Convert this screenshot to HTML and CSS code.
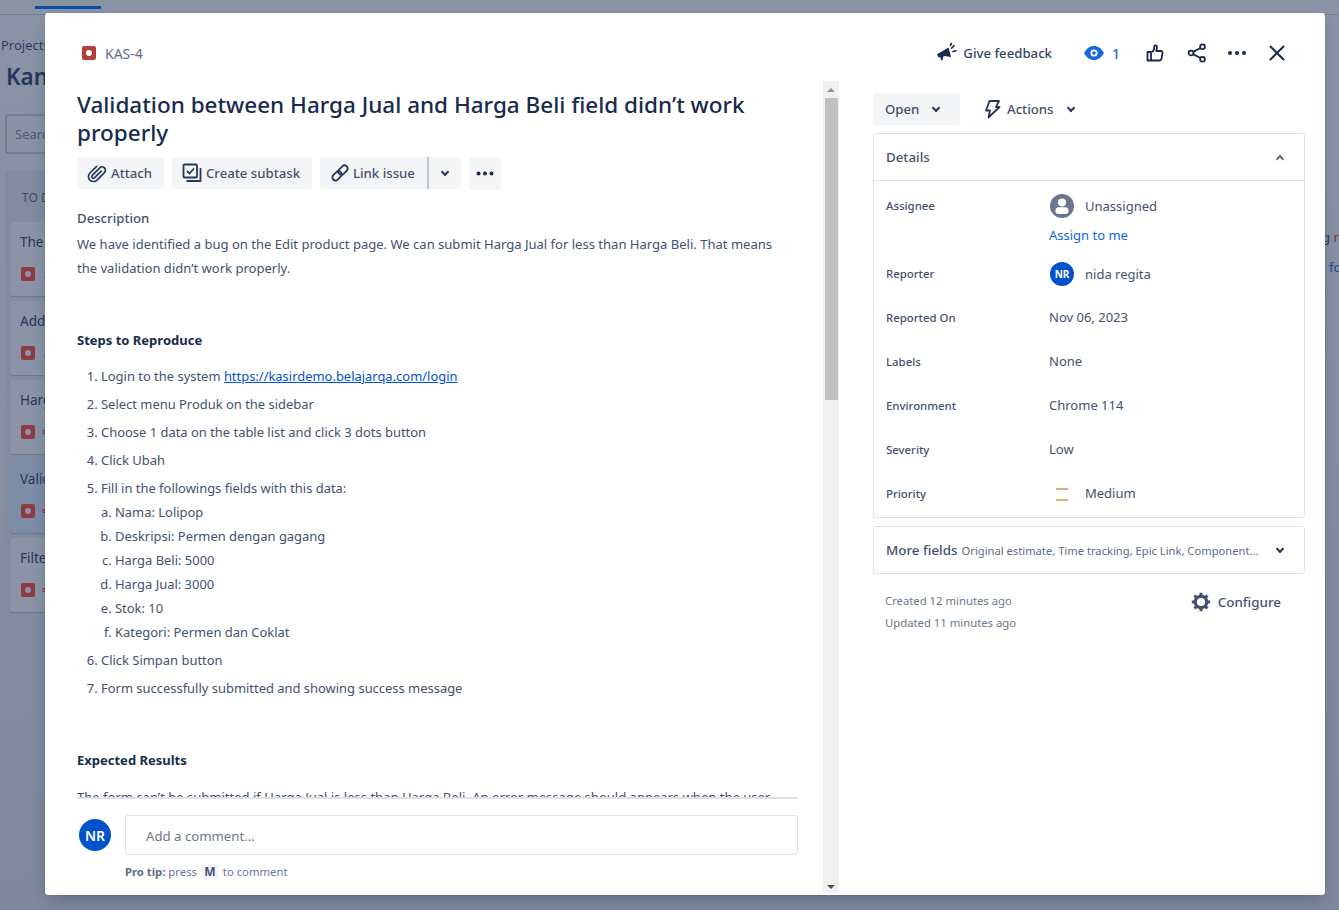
FILE: index.html
```html
<!DOCTYPE html>
<html>
<head>
    <title>KAS-4 - Kanban board</title>
    <link rel="stylesheet" href="styles.css">
</head>
<body>
    <!-- board behind the dialog -->
    <div class="board">
        <div class="topbar"><span class="topbar-tab"></span></div>
        <div class="crumb">Projects</div>
        <div class="board-title">Kanban board</div>
        <div class="search">Search</div>
        <div class="column">
            <div class="column-title">TO DO</div>
            <div class="card"><div class="card-text">The</div><div class="card-meta"><span class="bug-icon dim"></span><span class="arrow blue">↓</span></div></div>
            <div class="card"><div class="card-text">Add</div><div class="card-meta"><span class="bug-icon dim"></span><span class="arrow blue">↓</span></div></div>
            <div class="card"><div class="card-text">Harga</div><div class="card-meta"><span class="bug-icon dim"></span><span class="arrow red">=</span></div></div>
            <div class="card card-active"><div class="card-text">Validation</div><div class="card-meta"><span class="bug-icon dim"></span><span class="arrow red">=</span></div></div>
            <div class="card"><div class="card-text">Filter</div><div class="card-meta"><span class="bug-icon dim"></span><span class="arrow red">=</span></div></div>
        </div>
    </div>
    <div class="peek peek-one">g <span class="peek-red">r</span></div>
    <div class="peek peek-two">fo</div>

    <div class="modal">
        <div class="modal-head">
            <div class="issue-key"><span class="bug-icon"></span>KAS-4</div>
            <div class="head-actions">
                <span class="feedback">
                    <svg width="24" height="24" viewBox="0 0 24 24"><path d="M3 13.2 14.5 6.6l2.6 9.3-6.5-.9-1.4.7L8.5 19l-1.3.4-.9-3.4-1.8.4L3 13.2z" fill="#172b4d"/><path d="M17.6 7.2 20 4.6M19 10.6l3-.9M16.6 4.4l.8-2" stroke="#172b4d" stroke-width="1.6" stroke-linecap="round" fill="none"/></svg>
                    Give feedback
                </span>
                <span class="watch">
                    <svg width="20" height="14" viewBox="0 0 20 14"><path d="M0 7C2.4 2.6 6 0 10 0s7.600 2.600 10 7c-2.400 4.400-6 7-10 7S2.400 11.400 0 7z" fill="#1868db"/><circle cx="10" cy="7" r="3.600" fill="#fff"/><circle cx="10" cy="7" r="1.800" fill="#1868db"/></svg>
                    1
                </span>
                <svg class="head-icon like" width="18" height="18" viewBox="0 0 18 18" fill="none" stroke="#172b4d" stroke-width="1.800" stroke-linejoin="round"><path d="M1.500 8v8.500h3.500V8zM5 8c2 0 3.300-2.500 3.300-5.500 0-1.800 2.700-1.500 2.700.5 0 1.500-.4 2.800-.8 4H15c1 0 1.700.8 1.500 1.800l-1 6c-.2 1-.8 1.700-1.800 1.700H5"/></svg>
                <svg class="head-icon share" width="20" height="20" viewBox="0 0 20 20" fill="none" stroke="#172b4d" stroke-width="1.800"><circle cx="4" cy="10" r="2.400"/><circle cx="15.500" cy="3.800" r="2.400"/><circle cx="15.500" cy="16.200" r="2.400"/><path d="M6.200 8.900 13.400 5M6.200 11.100l7.200 3.900"/></svg>
                <svg class="head-icon dots" width="20" height="6" viewBox="0 0 20 6" fill="#172b4d"><circle cx="3" cy="3" r="2"/><circle cx="10" cy="3" r="2"/><circle cx="17" cy="3" r="2"/></svg>
                <svg class="head-icon close" width="16" height="16" viewBox="0 0 16 16" stroke="#172b4d" stroke-width="2" stroke-linecap="round"><path d="M1.500 1.500l13 13M14.500 1.500l-13 13"/></svg>
            </div>
        </div>

        <div class="modal-body">
            <div class="main">
                <div class="main-scroll">
                    <h1 class="title">Validation between Harga Jual and Harga Beli field didn’t work properly</h1>
                    <div class="toolbar">
                        <span class="btn btn-attach">
                            <svg width="20" height="20" viewBox="0 0 18 18" fill="none" stroke="#253858" stroke-width="1.500" stroke-linecap="round"><path transform="rotate(45 9 9)" d="M4.500 5v8.500a4.500 4.500 0 0 0 9 0V4a3 3 0 0 0-6 0v9.500a1.500 1.500 0 0 0 3 0V5"/></svg>
                            Attach
                        </span>
                        <span class="btn btn-subtask">
                            <svg width="20" height="20" viewBox="0 0 20 20" fill="none" stroke="#253858" stroke-width="1.800"><rect x="1.500" y="1.500" width="13.500" height="13" rx="1"/><path d="M5 8l2.500 2.500L12 5.500"/><path d="M18.500 5v13h-14"/></svg>
                            Create subtask
                        </span>
                        <span class="btn-group">
                            <span class="btn btn-link">
                                <svg width="18" height="18" viewBox="0 0 18 18" fill="none" stroke="#253858" stroke-width="1.800"><rect x="0.800" y="8.800" width="10.500" height="6.200" rx="3.100" transform="rotate(-45 6 11.900)"/><rect x="6.700" y="3" width="10.500" height="6.200" rx="3.100" transform="rotate(-45 12 6.100)"/></svg>
                                Link issue
                            </span>
                            <span class="btn btn-caret"><span class="chev"></span></span>
                        </span>
                        <span class="btn btn-more"><svg width="18" height="5" viewBox="0 0 18 5" fill="#172b4d"><circle cx="2.500" cy="2.500" r="2"/><circle cx="9" cy="2.500" r="2"/><circle cx="15.500" cy="2.500" r="2"/></svg></span>
                    </div>

                    <div class="desc-label">Description</div>
                    <p class="desc-text desc-first">We have identified a bug on the Edit product page. We can submit Harga Jual for less than Harga Beli. That means the validation didn’t work properly.</p>

                    <h2 class="section-title">Steps to Reproduce</h2>
                    <ol class="steps">
                        <li>Login to the system <a href="#">https://kasirdemo.belajarqa.com/login</a></li>
                        <li>Select menu Produk on the sidebar</li>
                        <li>Choose 1 data on the table list and click 3 dots button</li>
                        <li>Click Ubah</li>
                        <li>Fill in the followings fields with this data:
                            <ol class="sub-steps">
                                <li>Nama: Lolipop</li>
                                <li>Deskripsi: Permen dengan gagang</li>
                                <li>Harga Beli: 5000</li>
                                <li>Harga Jual: 3000</li>
                                <li>Stok: 10</li>
                                <li>Kategori: Permen dan Coklat</li>
                            </ol>
                        </li>
                        <li>Click Simpan button</li>
                        <li>Form successfully submitted and showing success message</li>
                    </ol>

                    <h2 class="section-title expected">Expected Results</h2>
                    <p class="desc-text expected-text">The form can’t be submitted if Harga Jual is less than Harga Beli. An error message should appears when the user</p>
                </div>
                <div class="comment">
                    <span class="avatar avatar-big">NR</span>
                    <div class="comment-box">
                        <div class="comment-input">Add a comment...</div>
                        <div class="pro-tip"><b>Pro tip:</b> press <kbd>M</kbd> to comment</div>
                    </div>
                </div>
            </div>

            <div class="scrollbar">
                <span class="scroll-up"></span>
                <span class="scroll-thumb"></span>
                <span class="scroll-down"></span>
            </div>

            <div class="side">
                <div class="status-row">
                    <span class="btn btn-status">Open <span class="chev"></span></span>
                    <span class="actions">
                        <svg width="18" height="20" viewBox="0 0 18 20" fill="none" stroke="#253858" stroke-width="1.800" stroke-linejoin="round"><path d="M6.500 2H16l-3 6h3.500L5.500 18.500l1.500-7H3z"/></svg>
                        Actions <span class="chev"></span>
                    </span>
                </div>

                <div class="panel">
                    <div class="panel-head">Details <span class="chev chev-up"></span></div>
                    <div class="panel-body">
                        <div class="field field-assignee">
                            <div class="field-label">Assignee</div>
                            <div class="field-value">
                                <div class="value-line">
                                    <svg class="value-icon" width="24" height="24" viewBox="0 0 24 24"><circle cx="12" cy="12" r="12" fill="#6b778c"/><circle cx="12" cy="8.500" r="4" fill="#fff"/><path d="M5.500 16.500c0-2 1.500-3.200 3-3.200h7c1.500 0 3 1.200 3 3.200v1c0 1.400-1.200 2.500-3 2.500h-7c-1.800 0-3-1.100-3-2.500z" fill="#fff"/></svg>
                                    Unassigned
                                </div>
                                <a class="assign-link" href="#">Assign to me</a>
                            </div>
                        </div>
                        <div class="field field-reporter">
                            <div class="field-label">Reporter</div>
                            <div class="field-value value-line"><span class="avatar value-icon">NR</span>nida regita</div>
                        </div>
                        <div class="field">
                            <div class="field-label">Reported On</div>
                            <div class="field-value">Nov 06, 2023</div>
                        </div>
                        <div class="field">
                            <div class="field-label">Labels</div>
                            <div class="field-value">None</div>
                        </div>
                        <div class="field">
                            <div class="field-label">Environment</div>
                            <div class="field-value">Chrome 114</div>
                        </div>
                        <div class="field">
                            <div class="field-label">Severity</div>
                            <div class="field-value">Low</div>
                        </div>
                        <div class="field field-last">
                            <div class="field-label">Priority</div>
                            <div class="field-value value-line"><span class="priority-icon value-icon"></span>Medium</div>
                        </div>
                    </div>
                </div>

                <div class="panel more-fields">
                    <b>More fields</b>
                    <span class="more-list">Original estimate, Time tracking, Epic Link, Component...</span>
                    <span class="chev"></span>
                </div>

                <div class="side-foot">
                    <div class="dates">
                        <div>Created 12 minutes ago</div>
                        <div>Updated 11 minutes ago</div>
                    </div>
                    <span class="configure">
                        <svg width="20" height="20" viewBox="0 0 20 20" fill="none"><circle cx="10" cy="10" r="5.700" stroke="#42526e" stroke-width="3.200"/><g stroke="#42526e" stroke-width="3"><path d="M10 .8v3M10 16.200v3M.8 10h3M16.200 10h3M3.500 3.500l2.100 2.100M14.400 14.400l2.100 2.100M3.500 16.500l2.100-2.100M14.400 5.600l2.100-2.100"/></g></svg>
                        Configure
                    </span>
                </div>
            </div>
        </div>
    </div>
</body>
</html>
```

FILE: styles.css
```css
* {
    box-sizing: border-box;
}

html, body {
    height: 100%;
}

body {
    margin: 0;
    overflow: hidden;
    background: #8993a4;
    font-family: "Noto Sans", Arial, sans-serif;
    font-size: 14px;
    color: #172b4d;
}

/* board under the dialog */
.board {
    height: 100%;
    background: linear-gradient(to bottom, #8a94a6, #7f899b);
    color: #24375a;
}

.topbar {
    height: 9px;
    border-bottom: 1px solid #747e92;
    padding-left: 35px;
}

.topbar-tab {
    display: block;
    width: 66px;
    height: 3px;
    margin-top: 6px;
    background: #0c4ea5;
}

.crumb {
    margin: 21px 0 0 1px;
    font-size: 13px;
    line-height: 18px;
    color: #2d3f5f;
}

.board-title {
    margin: 12px 0 0 6px;
    font-size: 22.500px;
    font-weight: 600;
    line-height: 22px;
    white-space: nowrap;
}

.search {
    width: 120px;
    height: 40px;
    margin: 26px 0 0 5px;
    padding: 0 0 0 8px;
    border: 2px solid #737d91;
    border-radius: 3px;
    line-height: 36px;
    font-size: 13px;
    color: #4d5a73;
}

.column {
    width: 200px;
    height: 460px;
    margin: 16px 0 0 5px;
    padding: 0 5px;
    background: #828c9e;
    border-radius: 3px;
}

.column-title {
    height: 52px;
    padding: 19px 0 0 12px;
    font-size: 12px;
    color: #3c4a66;
}

.card {
    height: 74px;
    margin-bottom: 5px;
    padding: 10px;
    background: #8a94a6;
    border-radius: 3px;
    box-shadow: 0 1px 1px #6c768a;
    white-space: nowrap;
    font-size: 13.500px;
}

.card-active {
    background: #7e8ca6;
}

.card-text {
    line-height: 20px;
}

.card-meta {
    display: flex;
    align-items: center;
    gap: 7px;
    margin: 15px 0 0 1px;
}

.arrow {
    font-weight: 700;
    line-height: 14px;
}

.blue { color: #1d56a8; }
.red { color: #8f3b44; }

.peek {
    position: absolute;
    font-size: 13px;
    white-space: nowrap;
    color: #2d3f5f;
}

.peek-one {
    left: 1322px;
    top: 228px;
}

.peek-red {
    color: #7a2f3c;
}

.peek-two {
    left: 1329px;
    top: 258px;
    color: #1d4c92;
}

.bug-icon {
    display: inline-block;
    position: relative;
    width: 14px;
    height: 14px;
    border-radius: 2px;
    background: #ae4139;
}

.bug-icon::after {
    content: "";
    position: absolute;
    left: 4px;
    top: 4px;
    width: 6px;
    height: 6px;
    border-radius: 50%;
    background: #fff;
}

.bug-icon.dim {
    background: #8f3b44;
}

.bug-icon.dim::after {
    background: #8a94a6;
}

/* dialog */
.modal {
    position: absolute;
    left: 45px;
    top: 13px;
    width: 1280px;
    height: 882px;
    display: flex;
    flex-direction: column;
    background: #fff;
    border-radius: 3px;
    box-shadow: 0 8px 16px -4px rgba(9, 30, 66, 0.3), 0 0 1px rgba(9, 30, 66, 0.31);
}

.modal-head {
    height: 68px;
    flex: none;
    display: flex;
    align-items: center;
    justify-content: space-between;
    padding: 12px 40px 0 37px;
}

.issue-key {
    display: flex;
    align-items: center;
    gap: 9px;
    color: #5e6c84;
}

.head-actions {
    display: flex;
    align-items: center;
}

.feedback {
    display: flex;
    align-items: center;
    gap: 5px;
    margin-right: 32px;
    font-size: 13.200px;
    font-weight: 500;
    color: #344563;
}

.watch {
    display: flex;
    align-items: center;
    gap: 8px;
    margin-right: 26px;
    font-weight: 500;
    color: #1868db;
}

.head-icon {
    display: block;
}

.like { margin-right: 23px; }
.share { margin-right: 20px; }
.dots { margin-right: 22px; }

.modal-body {
    flex: 1;
    min-height: 0;
    display: flex;
}

.main {
    width: 778px;
    flex: none;
    display: flex;
    flex-direction: column;
    padding: 0 25px 0 32px;
}

.main-scroll {
    height: 718px;
    flex: none;
    overflow: hidden;
    border-bottom: 2px solid #dfe1e6;
}

.title {
    margin: 10px 0 10px;
    font-size: 22.500px;
    font-weight: 500;
    line-height: 28px;
    color: #172b4d;
}

.toolbar {
    display: flex;
    gap: 8px;
}

.btn {
    display: inline-flex;
    align-items: center;
    height: 32px;
    border-radius: 3px;
    background: #f4f5f7;
    font-size: 13.200px;
    font-weight: 500;
    color: #42526e;
    white-space: nowrap;
}

.btn-attach {
    width: 87px;
    gap: 4px;
    padding-left: 10px;
}

.btn-subtask {
    width: 140px;
    gap: 4px;
    padding-left: 10px;
}

.btn-group {
    display: flex;
}

.btn-link {
    width: 109px;
    gap: 4px;
    padding-left: 11px;
    border-radius: 3px 0 0 3px;
    border-right: 2px solid #c1c7d0;
}

.btn-caret {
    width: 32px;
    justify-content: center;
    border-radius: 0 3px 3px 0;
}

.btn-more {
    width: 32px;
    height: 33px;
    justify-content: center;
}

/* small chevrons, rotated square */
.chev {
    display: inline-block;
    width: 6px;
    height: 6px;
    border-right: 2px solid #253858;
    border-bottom: 2px solid #253858;
    transform: translateY(-1px) rotate(45deg);
}

.chev-up {
    border-color: #5e6c84;
    transform: translateY(2px) rotate(225deg);
}

.desc-label {
    margin-top: 18px;
    font-size: 13.200px;
    font-weight: 500;
    line-height: 20px;
    color: #42526e;
}

.desc-text {
    margin: 0;
    max-width: 705px;
    font-size: 13.040px;
    line-height: 24px;
    color: #42526e;
}

.desc-first {
    margin-top: 4px;
}

.section-title {
    margin: 48px 0 0;
    font-size: 13px;
    font-weight: 700;
    line-height: 24px;
    color: #172b4d;
}

.steps {
    margin: 12px 0 0;
    padding-left: 24px;
    font-size: 12.950px;
    line-height: 24px;
    color: #42526e;
}

.steps > li {
    margin-bottom: 4px;
}

.steps a {
    color: #0052cc;
}

.sub-steps {
    margin: 0;
    padding-left: 14px;
    list-style: lower-alpha;
}

.expected {
    margin-top: 48px;
}

.expected-text {
    max-width: none;
    margin-top: 13px;
}

.comment {
    display: flex;
    gap: 14px;
    padding: 16px 0 0 2px;
}

.avatar {
    display: inline-flex;
    align-items: center;
    justify-content: center;
    width: 24px;
    height: 24px;
    flex: none;
    border-radius: 50%;
    background: #0052cc;
    color: #fff;
    font-size: 10px;
    font-weight: 700;
}

.avatar-big {
    width: 32px;
    height: 32px;
    margin-top: 4px;
    font-size: 14px;
    font-weight: 600;
}

.comment-box {
    flex: 1;
}

.comment-input {
    height: 40px;
    padding-left: 20px;
    border: 1px solid #dfe1e6;
    border-radius: 3px;
    line-height: 40px;
    color: #6b778c;
    font-size: 13.200px;
}

.pro-tip {
    margin-top: 9px;
    font-size: 11.300px;
    line-height: 16px;
    color: #6b778c;
}

.pro-tip b {
    color: #5e6c84;
}

.pro-tip kbd {
    display: inline-block;
    width: 18px;
    margin: 0 1px;
    border-radius: 3px;
    background: #f4f5f7;
    font-family: inherit;
    font-size: 12px;
    font-weight: 700;
    text-align: center;
    color: #42526e;
}

/* fake scrollbar of the left column */
.scrollbar {
    width: 16px;
    flex: none;
    height: 812px;
    display: flex;
    flex-direction: column;
    align-items: center;
    background: #f1f1f1;
    position: relative;
}

.scroll-thumb {
    width: 13px;
    height: 302px;
    margin-top: 17px;
    background: #c1c1c1;
}

.scroll-up, .scroll-down {
    position: absolute;
    left: 4px;
    width: 0;
    height: 0;
    border-left: 4px solid transparent;
    border-right: 4px solid transparent;
}

.scroll-up {
    top: 7px;
    border-bottom: 4px solid #8b93a5;
}

.scroll-down {
    bottom: 4px;
    border-top: 4px solid #505050;
}

.side {
    flex: 1;
    min-width: 0;
    padding: 12px 20px 0 34px;
}

.status-row {
    display: flex;
    align-items: center;
    height: 32px;
}

.btn-status {
    width: 87px;
    gap: 14px;
    padding-left: 12px;
}

.actions {
    display: flex;
    align-items: center;
    gap: 6px;
    margin-left: 23px;
    font-size: 13.200px;
    font-weight: 500;
    color: #42526e;
}

.actions .chev {
    margin-left: 9px;
}

.panel {
    border: 1px solid #dfe1e6;
    border-radius: 3px;
}

.status-row + .panel {
    margin-top: 8px;
}

.panel-head {
    height: 47px;
    display: flex;
    align-items: center;
    justify-content: space-between;
    padding: 0 21px 0 12px;
    border-bottom: 1px solid #dfe1e6;
    font-size: 13.300px;
    font-weight: 500;
    color: #42526e;
}

.panel-body {
    padding: 13px 12px 2px;
}

.field {
    display: flex;
    min-height: 44px;
    align-items: flex-start;
}

.field-last {
    min-height: 33px;
}

.field-label {
    width: 163px;
    flex: none;
    font-size: 11.400px;
    font-weight: 500;
    line-height: 24px;
    color: #42526e;
}

.field-value {
    font-size: 13px;
    line-height: 22px;
    color: #42526e;
}

.value-line {
    display: flex;
    align-items: center;
}

.value-icon {
    margin: 0 11px 0 1px;
}

.field-assignee {
    min-height: 68px;
}

.assign-link {
    display: block;
    margin-top: 6px;
    font-size: 13px;
    color: #0c66e4;
    text-decoration: none;
}

.priority-icon {
    position: relative;
    width: 24px;
    height: 22px;
}

.priority-icon::before {
    content: "";
    position: absolute;
    left: 6px;
    top: 6px;
    width: 12px;
    height: 9px;
    border-top: 2px solid #d9b27a;
    border-bottom: 2px solid #d9b27a;
}

.more-fields {
    display: flex;
    align-items: center;
    height: 48px;
    margin-top: 8px;
    padding: 0 21px 0 12px;
    white-space: nowrap;
}

.more-fields b {
    font-size: 13.400px;
    font-weight: 500;
    color: #42526e;
}

.more-list {
    flex: 1;
    min-width: 0;
    overflow: hidden;
    margin-left: 4px;
    font-size: 11.200px;
    color: #5e6c84;
}

.side-foot {
    display: flex;
    justify-content: space-between;
    padding: 16px 24px 0 12px;
}

.dates {
    font-size: 11.300px;
    line-height: 22px;
    color: #6b778c;
}

.configure {
    display: flex;
    align-items: center;
    gap: 7px;
    height: 24px;
    font-size: 13.400px;
    font-weight: 500;
    color: #42526e;
}
```
